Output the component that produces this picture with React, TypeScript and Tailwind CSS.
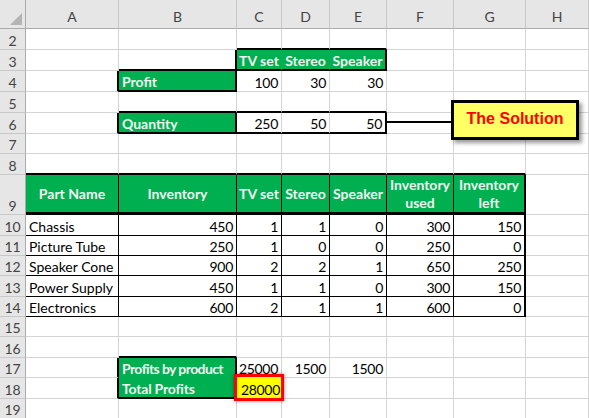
import { twMerge } from "tailwind-merge";

type Cell = { v?: string; c?: string; hl?: boolean };

const COLS = ["A", "B", "C", "D", "E", "F", "G", "H"];

const BASE =
  "relative flex items-end min-w-0 whitespace-nowrap border-r border-b border-[#d4d4d4] px-[3px] text-[14px] leading-[17px] text-black";
const HDR = "bg-[#e6e6e6] text-[#444] justify-center border-[#c8c8c8]";
const GREEN = "bg-[#00b050] text-[#f2f2f2] font-bold";
const NUM = "justify-end tracking-[-0.3px]";
// thick edge drawn on the cell above / left of a boxed range
const TOP = "border-b-2 border-b-black";
const LEFT = "border-r-2 border-r-black";
const TH =
  "bg-[#00b050] text-[#f2f2f2] font-bold items-center justify-center text-center whitespace-pre px-0 leading-[18px] border-r-black border-b-[3px] border-b-black";
const TD = "border-r-black border-b-black";

const pad = (cells: Cell[]): Cell[] => [
  ...cells,
  ...Array.from({ length: 8 - cells.length }, () => ({})),
];

const parts: [string, string, string, string, string, string, string][] = [
  ["Chassis", "450", "1", "1", "0", "300", "150"],
  ["Picture Tube", "250", "1", "0", "0", "250", "0"],
  ["Speaker Cone", "900", "2", "2", "1", "650", "250"],
  ["Power Supply", "450", "1", "1", "0", "300", "150"],
  ["Electronics", "600", "2", "1", "1", "600", "0"],
];

const rows: [number, Cell[]][] = [
  [2, [{}, {}, { c: TOP }, { c: TOP }, { c: TOP }]],
  [
    3,
    [
      {},
      { c: `${LEFT} ${TOP}` },
      { v: "TV set", c: `${GREEN} justify-center px-0 border-r-[#00b050] ${TOP}` },
      { v: "Stereo", c: `${GREEN} justify-center px-0 border-r-[#00b050] ${TOP}` },
      { v: "Speaker", c: `${GREEN} justify-center px-0 ${LEFT} ${TOP}` },
    ],
  ],
  [
    4,
    [
      { c: LEFT },
      { v: "Profit", c: `${GREEN} ${LEFT} ${TOP}` },
      { v: "100", c: NUM },
      { v: "30", c: NUM },
      { v: "30", c: NUM },
    ],
  ],
  [5, [{}, { c: TOP }, { c: TOP }, { c: TOP }, { c: TOP }]],
  [
    6,
    [
      { c: LEFT },
      { v: "Quantity", c: `${GREEN} ${LEFT} ${TOP}` },
      { v: "250", c: `${NUM} ${TOP}` },
      { v: "50", c: `${NUM} ${TOP}` },
      { v: "50", c: `${NUM} ${LEFT} ${TOP}` },
    ],
  ],
  [7, []],
  [8, [{ c: TOP }, { c: TOP }, { c: TOP }, { c: TOP }, { c: TOP }, { c: TOP }, { c: TOP }]],
  [
    9,
    [
      { v: "Part Name", c: TH },
      { v: "Inventory", c: TH },
      { v: "TV set", c: TH },
      { v: "Stereo", c: TH },
      { v: "Speaker", c: TH },
      { v: "Inventory\nused", c: TH },
      { v: "Inventory\nleft", c: `${TH} border-r-2` },
    ],
  ],
  ...parts.map(
    (p, i): [number, Cell[]] => [
      10 + i,
      p.map((v, j) => ({
        v,
        c: twMerge(TD, j > 0 && NUM, j === 6 && "border-r-2"),
      })),
    ]
  ),
  [15, []],
  [16, [{}, { c: TOP }]],
  [
    17,
    [
      { c: LEFT },
      {
        v: "Profits by product",
        c: `${GREEN} ${LEFT} border-b-[#00b050] tracking-[-0.6px]`,
      },
      { v: "25000", c: NUM },
      { v: "1500", c: NUM },
      { v: "1500", c: NUM },
    ],
  ],
  [
    18,
    [
      { c: LEFT },
      { v: "Total Profits", c: `${GREEN} ${LEFT} ${TOP} tracking-[-0.2px]` },
      { v: "28000", hl: true },
    ],
  ],
  [19, []],
];

function GridCell({ v, c, hl }: Cell) {
  return (
    <div className={twMerge(BASE, c)}>
      {hl ? (
        <span className="absolute -left-[3px] -right-[3px] -top-[4px] -bottom-[3px] z-10 flex items-end justify-end border-[3px] border-[#ff0000] bg-[#ffff00] pr-[1px] tracking-[-0.3px] shadow-[0_0_4px_rgba(0,0,0,0.45)]">
          {v}
        </span>
      ) : (
        v
      )}
    </div>
  );
}

export default function App() {
  return (
    <div className="relative h-[418px] w-[589px] overflow-hidden bg-white font-['Lato','Liberation_Sans',sans-serif]">
      <div className="grid grid-cols-[26px_93px_118px_45px_48px_57px_67px_72px_63px] grid-rows-[29px_21px_21px_21px_21px_21px_20px_21px_40px_21px_20px_20px_21px_20px_20px_21px_20px_21px_20px]">
        {/* column headers */}
        <div className={twMerge(BASE, HDR, "justify-end border-b-[#ababab] border-r-[#ababab] p-[2px]")}>
          <svg width="14" height="14" viewBox="0 0 14 14">
            <polygon points="1,13 13,1 13,13" fill="#b4b4b4" />
          </svg>
        </div>
        {COLS.map((l) => (
          <div key={l} className={twMerge(BASE, HDR, "border-b-[#ababab] pb-[3px]")}>
            {l}
          </div>
        ))}

        {rows.map(([n, cells]) => (
          <div key={n} className="contents">
            <div className={twMerge(BASE, HDR, "border-r-[#ababab]")}>{n}</div>
            {pad(cells).map((cell, i) => (
              <GridCell key={i} {...cell} />
            ))}
          </div>
        ))}
      </div>

      {/* callout */}
      <div className="absolute left-[386px] top-[121px] h-[2px] w-[66px] bg-black" />
      <div className="absolute left-[451px] top-[100px] flex h-[40px] w-[128px] items-center justify-center border-[3px] border-black bg-[#ffff66] pb-[2px] shadow-[3px_3px_4px_rgba(0,0,0,0.4)]">
        <span className="font-['Liberation_Sans',Arial,sans-serif] text-[16px] font-bold text-[#ff0000]">
          The Solution
        </span>
      </div>
    </div>
  );
}
